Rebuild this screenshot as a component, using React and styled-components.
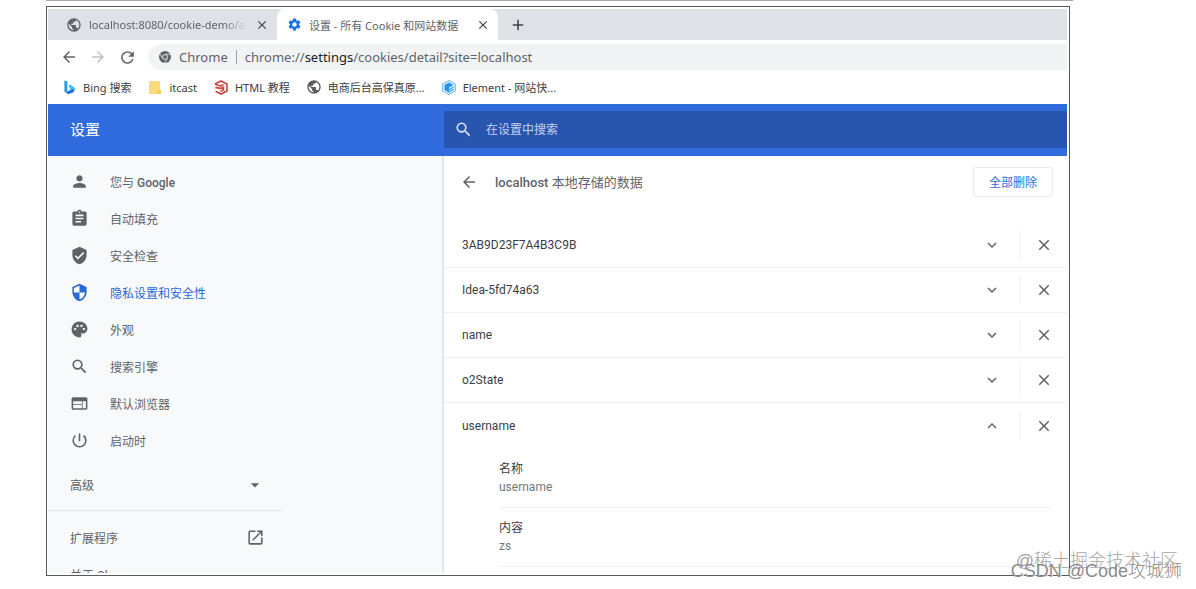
import React from "react";
import styled, { createGlobalStyle } from "styled-components";
import {
  MdAdd,
  MdArrowBack,
  MdArrowDropDown,
  MdArrowForward,
  MdAssignment,
  MdClose,
  MdExpandLess,
  MdExpandMore,
  MdOpenInNew,
  MdPalette,
  MdPerson,
  MdPowerSettingsNew,
  MdPublic,
  MdRefresh,
  MdSearch,
  MdSecurity,
  MdSettings,
  MdVerifiedUser,
  MdWeb,
} from "react-icons/md";

const uiFont = `"Noto Sans", "Noto Sans CJK SC", sans-serif`;
const pageFont = `Roboto, "Noto Sans CJK SC", sans-serif`;

const GlobalStyle = createGlobalStyle`
  * { box-sizing: border-box; }
  body { margin: 0; background: #fff; font-family: ${pageFont}; font-size: 12px; color: #3c4043; }
  button, input { font: inherit; color: inherit; }
  button { border: 0; padding: 0; background: none; cursor: pointer; }
  a { color: inherit; text-decoration: none; }
  svg { display: block; flex: none; }
`;

const Page = styled.div`
  position: relative;
  height: 100vh;
  display: flex;
  flex-direction: column;
  padding: 0 123px 13px 46px;
`;

const TopRule = styled.div`
  flex: none;
  height: 1px;
  margin-bottom: 5px;
  background: #a9a9a9;
`;

const Frame = styled.div`
  flex: 1;
  min-height: 0;
  display: flex;
  flex-direction: column;
  margin-right: 3px;
  padding: 2px 2px 2px 1px;
  border: 1px solid #55585c;
  overflow: hidden;
`;

const TabStrip = styled.div`
  flex: none;
  display: flex;
  align-items: stretch;
  height: 31px;
  background: #dee1e6;
  font-family: ${uiFont};
  font-size: 11px;
`;

const Tab = styled.div`
  display: flex;
  align-items: center;
  gap: 7px;
  width: ${(p) => (p.$active ? "221px" : "229px")};
  padding: 0 8px 0 ${(p) => (p.$active ? "10px" : "18px")};
  background: ${(p) => (p.$active ? "#fff" : "transparent")};
  border-radius: 8px 8px 0 0;
  color: #5f6368;
`;

const TabTitle = styled.button`
  flex: 1;
  min-width: 0;
  overflow: hidden;
  white-space: nowrap;
  text-align: left;
  ${(p) => p.$fade && "mask-image: linear-gradient(to right, #000 84%, transparent);"}
`;

const IconButton = styled.button`
  display: flex;
  align-items: center;
  justify-content: center;
  width: ${(p) => p.$width || 16}px;
  color: ${(p) => p.$color || "#5f6368"};
`;

const Toolbar = styled.div`
  flex: none;
  display: flex;
  align-items: center;
  height: 34px;
  padding-left: 6px;
`;

const AddressBar = styled.div`
  flex: 1;
  display: flex;
  align-items: center;
  gap: 8px;
  height: 26px;
  margin-left: 6px;
  padding-left: 11px;
  border-radius: 13px 0 0 13px;
  background: #f1f3f4;
  color: #5f6368;
  font-family: ${uiFont};
  font-size: 13px;
  white-space: nowrap;
`;

const Divider = styled.span`
  width: 1px;
  height: 14px;
  background: #9aa0a6;
`;

const Url = styled.div`
  flex: 1;
  outline: none;
  b { font-weight: 400; color: #202124; }
`;

const Bookmarks = styled.nav`
  flex: none;
  display: flex;
  align-items: center;
  gap: 17px;
  height: 30px;
  padding: 0 0 4px 14px;
  font-family: ${uiFont};
  font-size: 11px;
`;

const Bookmark = styled.a`
  display: flex;
  align-items: center;
  gap: 7px;
  white-space: nowrap;
`;

const BookmarkIcon = styled.span`
  display: flex;
  justify-content: center;
  width: 14px;
`;

const Header = styled.header`
  flex: none;
  display: flex;
  height: 52px;
  background: #306bdd;
`;

const Brand = styled.h1`
  flex: none;
  width: 396px;
  margin: 0;
  padding-left: 22px;
  color: #fff;
  font-size: 15px;
  font-weight: 400;
  line-height: 52px;
`;

const SearchBox = styled.label`
  flex: 1;
  display: flex;
  align-items: center;
  gap: 13px;
  height: 37px;
  margin-top: 7px;
  padding-left: 10px;
  background: #2855ae;
  color: #d5e0f5;
`;

const SearchInput = styled.input`
  flex: 1;
  min-width: 0;
  padding: 0;
  border: 0;
  outline: 0;
  background: transparent;
  &::placeholder { color: #c3d2f0; opacity: 1; }
`;

const Body = styled.div`
  flex: 1;
  min-height: 0;
  display: flex;
  overflow: hidden;
`;

const Sidebar = styled.nav`
  flex: none;
  width: 396px;
  padding-top: 7px;
  background: #f8f9fb;
  border-right: 2px solid #e3e5e8;
  color: #5f6368;
  overflow: hidden;
`;

const NavLink = styled.a`
  display: flex;
  align-items: center;
  gap: 21px;
  height: 37px;
  padding-left: 22px;
  color: ${(p) => (p.$active ? "#2a69d8" : "inherit")};
`;

const Latin = styled.span`
  font-weight: 500;
`;

const Foot = styled.div`
  width: 233px;
`;

const Advanced = styled.button`
  display: flex;
  align-items: center;
  justify-content: space-between;
  width: 100%;
  height: 52px;
  margin-bottom: 8px;
  padding: 0 16px 0 22px;
  border-bottom: 1px solid #e0e2e5;
`;

const FootLink = styled.a`
  display: flex;
  align-items: center;
  justify-content: space-between;
  height: 37px;
  padding: 0 16px 0 22px;
`;

const Main = styled.main`
  flex: 1;
  min-width: 0;
  overflow: hidden;
`;

const MainHeader = styled.div`
  display: flex;
  align-items: center;
  height: 51px;
  margin-bottom: 16px;
  padding: 0 14px 0 17px;
`;

const Title = styled.h2`
  flex: 1;
  margin: 0 0 0 18px;
  color: #5f6368;
  font-size: 13px;
  font-weight: 400;
`;

const RemoveAll = styled.button`
  width: 80px;
  height: 30px;
  border: 1px solid #e8eaed;
  border-radius: 3px;
  color: #2374dd;
`;

const List = styled.ul`
  margin: 0;
  padding: 0;
  list-style: none;
`;

const Row = styled.li`
  display: flex;
  align-items: center;
  height: ${(p) => (p.$open ? 46 : 45)}px;
  padding: 0 11px 0 18px;
  border-bottom: 1px solid ${(p) => (p.$open ? "transparent" : "#eff0f1")};
`;

const RowName = styled.span`
  flex: 1;
`;

const Separator = styled.span`
  width: 1px;
  height: 30px;
  margin: 0 12px 0 15px;
  background: #f1f2f3;
`;

const Details = styled.dl`
  margin: 0 16px 0 55px;
`;

const Detail = styled.div`
  padding: 11px 0 11px;
  border-bottom: 1px solid #eff0f1;
  line-height: 18px;
  dt { color: #3c4043; }
  dd { margin: 0; color: #73777b; }
`;

const Watermark = styled.div`
  position: absolute;
  right: ${(p) => p.$right}px;
  bottom: ${(p) => p.$bottom}px;
  color: ${(p) => p.$color};
  font-family: "Liberation Sans", "Noto Sans CJK SC", sans-serif;
  font-size: 18px;
  font-weight: 300;
  line-height: 24px;
  white-space: nowrap;
  text-shadow: 1px 1px 0 rgba(255, 255, 255, 0.8);
`;

const ChromeIcon = () => (
  <svg width="12" height="12" viewBox="0 0 24 24" aria-hidden="true">
    <circle cx="12" cy="12" r="12" fill="#5f6368" />
    <path d="M12 6.6h11M7.3 14.7 2 5.6M16.7 14.7 11.3 24" stroke="#f1f3f4" strokeWidth="1.4" />
    <circle cx="12" cy="12" r="5.4" fill="#f1f3f4" />
    <circle cx="12" cy="12" r="3.9" fill="#5f6368" />
  </svg>
);

const BingIcon = () => (
  <svg width="13" height="14" viewBox="0 0 13 14" aria-hidden="true">
    <path d="M1.4 0.4 4.4 1.5V10.4L3.6 13 1.4 11.6Z" fill="#2b9be8" />
    <path d="M6 4.8 9.6 6.2Q12 7.4 11.6 10 11.2 12 9.4 12.8L5.6 14Q3.8 14 2.8 12.6L8.4 9.2 7 8.4Z" fill="#1c74dc" />
    <path d="M6 4.8 9.6 6.2Q11.6 7.2 11.7 9.4L8.4 9.2 7 8.4Z" fill="#37c5ee" />
  </svg>
);

const FolderIcon = () => (
  <svg width="12" height="13" viewBox="0 0 12 13" aria-hidden="true">
    <path d="M1 0H10Q11 0 11 1V9Q12 9 12 10V12Q12 13 11 13H1Q0 13 0 12V1Q0 0 1 0Z" fill="#fbdc7c" />
    <path d="M8 9H11Q12 9 12 10V12Q12 13 11 13H8Z" fill="#f4ce62" />
  </svg>
);

const TutorialIcon = () => (
  <svg width="14" height="15" viewBox="0 0 14 15" fill="none" stroke="#cf4238" strokeWidth="1.6" aria-hidden="true">
    <path d="M1 4 7 1 13 4V11L7 14 1.6 11.2" />
    <path d="M1 4 6.4 6.2 9.6 4.8M1.4 7.4 6 8.4 9.4 7.4V10L6.4 11.2" />
  </svg>
);

const ElementIcon = () => (
  <svg width="14" height="15" viewBox="0 0 14 15" aria-hidden="true">
    <path d="M7 0.5 13.4 4V11L7 14.5 0.6 11V4Z" fill="#d9effc" stroke="#67bdf3" />
    <path d="M7 2.4 11.4 4.9 7 7.6V9.2L11.4 6.6V7.8L7 10.4V11.4L11.4 8.8V10L7 12.6 2.6 10V4.9Z" fill="#2196ee" />
  </svg>
);

const navItems = [
  { label: "您与 ", latin: "Google", icon: MdPerson },
  { label: "自动填充", icon: MdAssignment },
  { label: "安全检查", icon: MdVerifiedUser },
  { label: "隐私设置和安全性", icon: MdSecurity, active: true },
  { label: "外观", icon: MdPalette },
  { label: "搜索引擎", icon: MdSearch },
  { label: "默认浏览器", icon: MdWeb },
  { label: "启动时", icon: MdPowerSettingsNew },
];

const bookmarks = [
  { label: "Bing 搜索", icon: <BingIcon /> },
  { label: "itcast", icon: <FolderIcon /> },
  { label: "HTML 教程", icon: <TutorialIcon /> },
  { label: "电商后台高保真原...", icon: <MdPublic size={16} color="#5a5d61" /> },
  { label: "Element - 网站快...", icon: <ElementIcon /> },
];

const cookies = ["3AB9D23F7A4B3C9B", "Idea-5fd74a63", "name", "o2State", "username"];

export default function App() {
  return (
    <Page>
      <GlobalStyle />
      <TopRule />
      <Frame>
        <TabStrip>
          <Tab>
            <MdPublic size={16} />
            <TabTitle $fade>localhost:8080/cookie-demo/a</TabTitle>
            <IconButton $width={14} $color="#3c4043" aria-label="关闭标签页"><MdClose size={14} /></IconButton>
          </Tab>
          <Tab $active>
            <MdSettings size={15} color="#1a73e8" />
            <TabTitle>设置 - 所有 Cookie 和网站数据</TabTitle>
            <IconButton $width={14} $color="#3c4043" aria-label="关闭标签页"><MdClose size={14} /></IconButton>
          </Tab>
          <IconButton $width={40} $color="#3c4043" aria-label="新标签页"><MdAdd size={18} /></IconButton>
        </TabStrip>
        <Toolbar>
          <IconButton $width={29} aria-label="后退"><MdArrowBack size={18} /></IconButton>
          <IconButton $width={30} $color="#bdc1c6" aria-label="前进"><MdArrowForward size={18} /></IconButton>
          <IconButton $width={29} aria-label="重新加载"><MdRefresh size={19} /></IconButton>
          <AddressBar>
            <ChromeIcon />
            <span>Chrome</span>
            <Divider />
            <Url role="textbox" aria-label="地址" contentEditable suppressContentEditableWarning>
              chrome://<b>settings</b>/cookies/detail?site=localhost
            </Url>
          </AddressBar>
        </Toolbar>
        <Bookmarks>
          {bookmarks.map((b) => (
            <Bookmark href="#" key={b.label}><BookmarkIcon>{b.icon}</BookmarkIcon>{b.label}</Bookmark>
          ))}
        </Bookmarks>
        <Header>
          <Brand>设置</Brand>
          <SearchBox>
            <MdSearch size={19} />
            <SearchInput type="text" placeholder="在设置中搜索" aria-label="在设置中搜索" />
          </SearchBox>
        </Header>
        <Body>
          <Sidebar>
            {navItems.map(({ label, icon: Icon, active, latin }) => (
              <NavLink href="#" key={label} $active={active}>
                <Icon size={19} />
                <span>{label}{latin && <Latin>{latin}</Latin>}</span>
              </NavLink>
            ))}
            <Foot>
              <Advanced>高级<MdArrowDropDown size={20} /></Advanced>
              <FootLink href="#">扩展程序<MdOpenInNew size={19} /></FootLink>
              <FootLink href="#">关于 Chrome</FootLink>
            </Foot>
          </Sidebar>
          <Main>
            <MainHeader>
              <IconButton aria-label="返回"><MdArrowBack size={18} /></IconButton>
              <Title><Latin>localhost</Latin> 本地存储的数据</Title>
              <RemoveAll>全部删除</RemoveAll>
            </MainHeader>
            <List>
              {cookies.map((name) => {
                const open = name === "username";
                return (
                  <Row key={name} $open={open}>
                    <RowName>{name}</RowName>
                    <IconButton $width={24} aria-label="展开" aria-expanded={open}>
                      {open ? <MdExpandLess size={18} /> : <MdExpandMore size={18} />}
                    </IconButton>
                    <Separator />
                    <IconButton $width={24} aria-label="移除"><MdClose size={18} /></IconButton>
                  </Row>
                );
              })}
            </List>
            <Details>
              <Detail><dt>名称</dt><dd>username</dd></Detail>
              <Detail><dt>内容</dt><dd>zs</dd></Detail>
            </Details>
          </Main>
        </Body>
      </Frame>
      <Watermark $right={18} $bottom={16} $color="#a5a5a5">@稀土掘金技术社区</Watermark>
      <Watermark $right={14} $bottom={6} $color="#8c8c8c">CSDN @Code攻城狮</Watermark>
    </Page>
  );
}
